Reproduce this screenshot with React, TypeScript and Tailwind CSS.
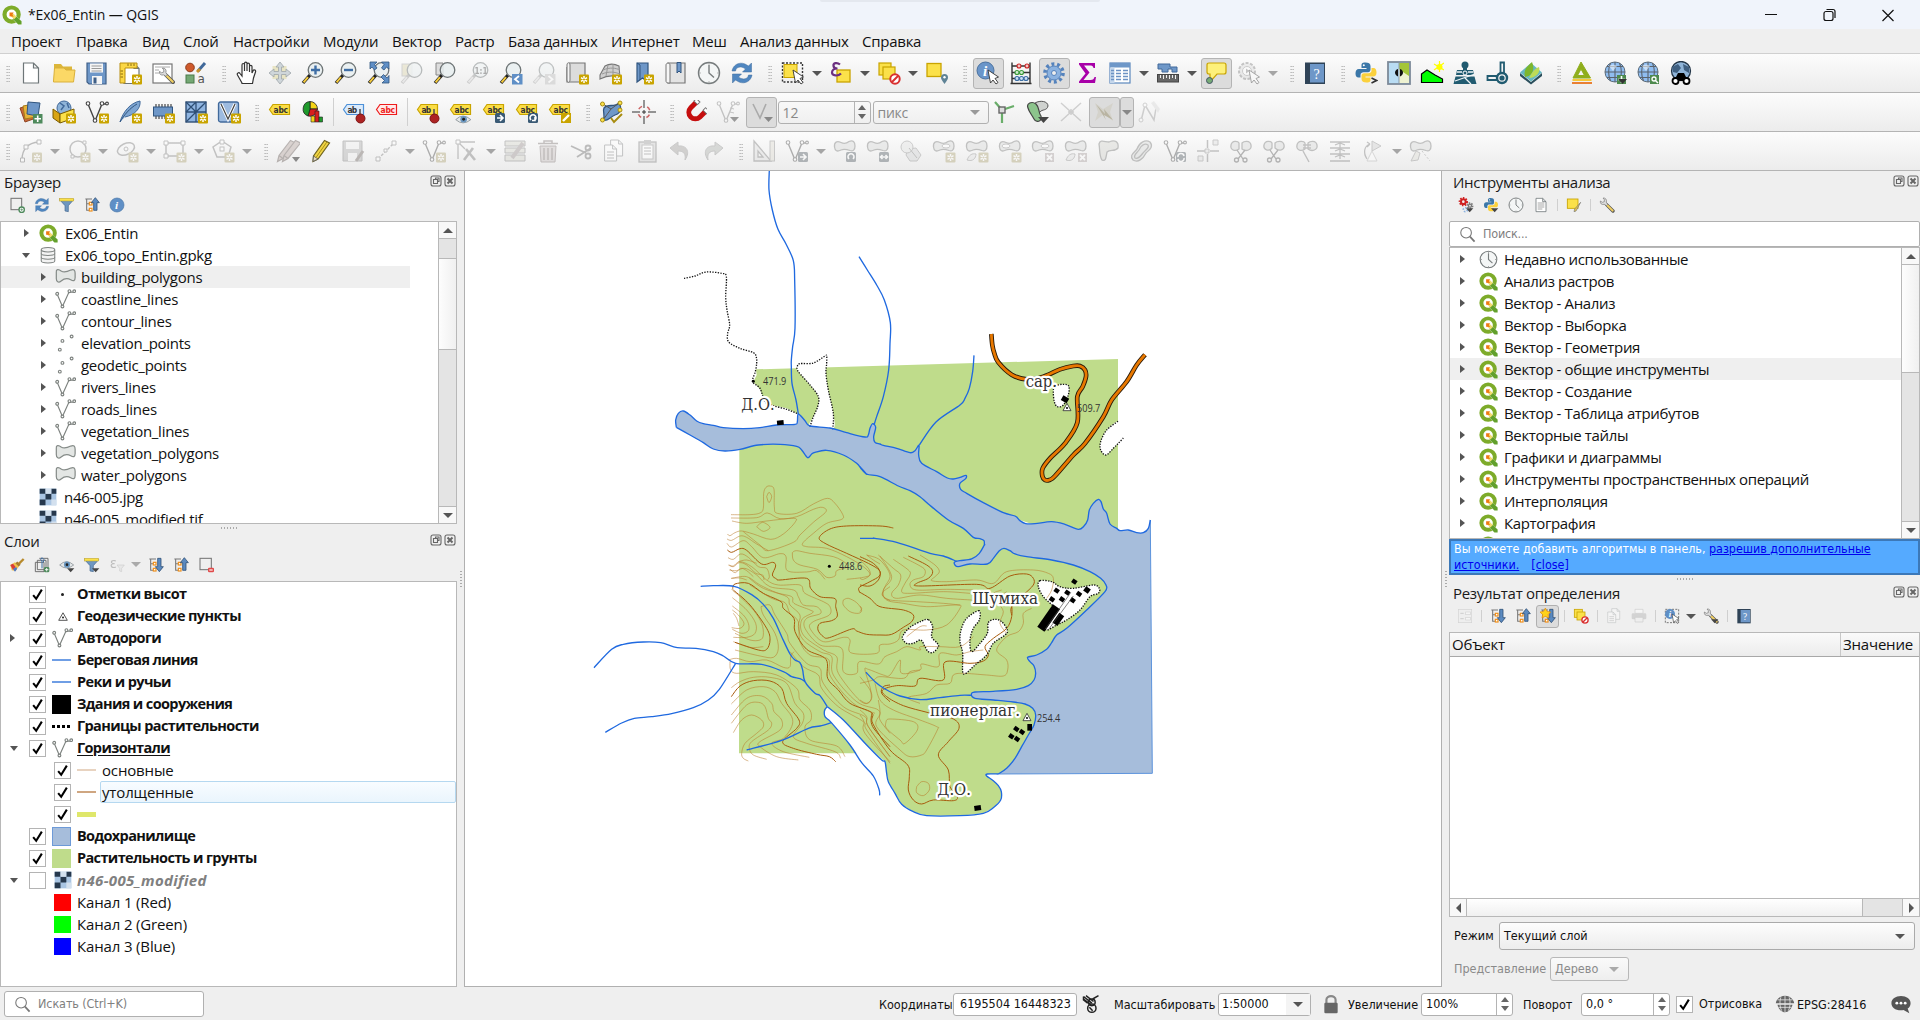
import React, { ReactNode } from "react";

/* ------------------------------------------------------------------ */
/* Icon parts, all drawn in a 24 x 24 box                               */
/* ------------------------------------------------------------------ */

const Star = ({ x = 13, y = 13 }: { x?: number; y?: number }) => (
  <g transform={`translate(${x} ${y})`}>
    <rect width="10" height="10" rx="1" fill="#c9a400" />
    <path d="M5 1.5V8.5M2 3.2L8 6.8M8 3.2L2 6.8" stroke="#fff" strokeWidth="1.5" />
    <circle cx="5" cy="5" r="1" fill="#c9a400" />
  </g>
);
const Dark = ({ d }: { d: string }) => (
  <g transform="translate(13 13)">
    <rect width="10" height="10" rx="1.5" fill="#3a5a75" />
    <path d={d} stroke="#fff" strokeWidth="1.6" fill="none" />
  </g>
);
const Lens = ({ dull }: { dull?: boolean }) => (
  <>
    <path d="M2 22L9 14" stroke={dull ? "#999" : "#222"} strokeWidth="3.4" />
    <path d="M2.6 21.3L7 16.2" stroke={dull ? "#ddd" : "#f5cb3c"} strokeWidth="2" />
    <circle cx="14.5" cy="9" r="7.3" fill="#e8eef0" fillOpacity=".85" stroke="#6d7475" strokeWidth="1.3" />
  </>
);
const Tag = ({ fill = "#fbdd45", stroke = "#c9a400", color = "#333", y = 0, t = "abc" }: { fill?: string; stroke?: string; color?: string; y?: number; t?: string }) => (
  <g transform={`translate(0 ${y})`}>
    <path d="M1.5 9.5L5 4.5H21.5V14.5H5Z" fill={fill} stroke={stroke} strokeWidth="1.2" />
    <text x="5.6" y="12.6" fontSize="8.4" fontWeight="700" fill={color} fontFamily="DejaVu Sans Condensed, DejaVu Sans, sans-serif" textLength={t.length * 4.8}>{t}</text>
  </g>
);
const Sheet = ({ x = 2, y = 2, s = 1 }: { x?: number; y?: number; s?: number }) => (
  <path transform={`translate(${x} ${y}) scale(${s})`} d="M2 0H12L17 5V20H2Z M12 0V5H17" fill="#fff" stroke="#6e7678" strokeWidth="1.2" />
);
const Pointer = () => <path d="M12 9L14.5 22L17 19L20 23L22 21.5L19 17.5L22.5 16Z" fill="#fff" stroke="#333" strokeWidth=".9" />;
const Blob = ({ fill = "#d3d9d5", d = "M1.5 8C1 3 4 1.5 8 3.5C11 5 13 5 16 2.5C20 .5 22 3 22 7C22 11 20 12.5 17 11.5C13 10 11 9.5 8 11C4 13 2 12 1.5 8Z" }: { fill?: string; d?: string }) => (
  <path d={d} fill={fill} stroke="#6e736f" strokeWidth="1.3" />
);
const Vee = () => (
  <>
    <path d="M3 4L10 21L17 4H22" fill="none" stroke="#444" strokeWidth="1.4" />
    <g fill="#fff" stroke="#444" strokeWidth="1.1"><circle cx="3" cy="3.5" r="1.8" /><circle cx="10" cy="20.5" r="1.8" /><circle cx="17" cy="3.5" r="1.8" /><circle cx="22" cy="3.5" r="1.4" /></g>
  </>
);
const Globe = () => (
  <>
    <circle cx="12" cy="11" r="10" fill="#8fbdf0" stroke="#5b6b7a" />
    <path d="M2 11H22M4 5.5H20M4 16.5H20M12 1V21M7.5 2C5 8 5 14 7.5 20M16.5 2C19 8 19 14 16.5 20" fill="none" stroke="#5a636d" strokeWidth="1.1" />
    <path d="M6 5Q10 2 14 5L10 10Z" fill="#eef5fc" fillOpacity=".6" />
  </>
);
const Scissors = () => (
  <g fill="none" stroke="#555" strokeWidth="1.3"><path d="M8 11L14 20M16 11L9 20" /><circle cx="7.5" cy="21" r="2" /><circle cx="16" cy="21" r="2" /></g>
);
const Python = () => (
  <>
    <path d="M11.5 1.5C7.5 1.5 7.5 3 7.5 5V7H12.5V8H5C2.5 8 1.5 10 1.5 12.5S2.5 16.5 4.5 16.5H6.5V14C6.5 12 8 11.2 9.5 11.2H14C15.5 11.2 16.5 10 16.5 8.5V5C16.5 2.5 14.5 1.5 11.5 1.5Z" fill="#3b77a8" />
    <path d="M12.5 21.5C16.5 21.5 16.5 20 16.5 18V16.5H11.5V15.5H19C21.5 15.5 22.5 14 22.5 11.5S21.5 7 19.5 7H17.5V9.5C17.5 11.5 16 12.2 14.5 12.2H10C8.5 12.2 7.5 13.2 7.5 14.7V18C7.5 20.5 9.5 21.5 12.5 21.5Z" fill="#fbd13d" />
    <circle cx="9.8" cy="4.2" r="1" fill="#fff" />
  </>
);
const QLogo = () => (
  <>
    <circle cx="11.5" cy="11.5" r="8.5" fill="#fff" stroke="#7dab2a" strokeWidth="5" />
    <path d="M12.5 16.5L16.5 13L24 20.5V24H19.5Z" fill="#fff" />
    <path d="M13.5 14H17.5L23.5 19.5V23.5H19.5L13.5 17.5Z" fill="#62a02c" />
    <path d="M10.5 10.5H14L17.5 14L14.5 17L10.5 13.5Z" fill="#f4dc6e" />
    <path d="M9 9H14L12.500 11.500L14 14L9 13.500Z" fill="#ee7913" />
  </>
);
const Tree = ({ up }: { up?: boolean }) => (
  <>
    <path d="M2 3H12M4 3V20H8M4 10H8" fill="none" stroke="#777" strokeWidth="1.6" />
    <g fill="#fff" stroke="#ef8f1c" strokeWidth="1.8"><rect x="8" y="8" width="4" height="4" /><rect x="8" y="17" width="4" height="4" /></g>
    <path d={up ? "M17 1L23 8.5H19.5V20H14.5V8.5H11Z" : "M17 22L23 14.5H19.5V2H14.5V14.5H11Z"} fill="#5b8ac0" stroke="#2f4f75" strokeWidth="1.2" />
  </>
);
const Funnel = () => (
  <>
    <path d="M1 4H22L14 13V22L9 21V13Z" fill="#6f97c0" stroke="#456a92" />
    <rect x="1" y="2" width="21" height="4" fill="#fbe14a" stroke="#b9a02c" strokeWidth=".8" />
  </>
);
const Wrench = () => (
  <>
    <path d="M11 11L21 21" stroke="#555" strokeWidth="5" strokeLinecap="round" />
    <path d="M12 12L20.5 20.5" stroke="#f0cf62" strokeWidth="3" strokeLinecap="round" />
    <path d="M2 6L5 8L8 7L8 4L6 1.5C10 1 12 4 11 8L13 11L11 13L8 11C4 12 1.5 10 2 6Z" fill="#ddd" stroke="#777" />
  </>
);
const Eye = () => (
  <>
    <path d="M1 12Q11 2 22 12Q11 21 1 12Z" fill="#e4e8ea" stroke="#8a9296" strokeWidth="1.2" />
    <circle cx="12" cy="11.5" r="4.6" fill="#6895bf" /><circle cx="12" cy="11.5" r="2" fill="#222" />
  </>
);
const Caret = () => <path d="M12 17H23L17.5 23Z" fill="#444" />;
const Clock = () => (
  <>
    <circle cx="12" cy="12" r="10.5" fill="#f4f6f6" stroke="#777c7d" strokeWidth="1.4" />
    <path d="M12 4V12L17 16.5" fill="none" stroke="#777c7d" strokeWidth="1.4" />
    <path d="M12 2.5V3.5M12 20.5V21.5M2.5 12H3.5M20.5 12H21.5" stroke="#777" />
  </>
);
const Refresh = () => (
  <g fill="#4f86c0" stroke="#3d6b9c" strokeWidth=".5">
    <path d="M2 10C3 4 9 .5 15 3L18.5 5L21.5 2V11H12.5L15.5 8C11 4.5 6 6 5.5 10Z" />
    <path d="M22 14C21 20 15 23.5 9 21L5.5 19L2.5 22V13H11.5L8.5 16C13 19.5 18 18 18.5 14Z" />
  </g>
);
const Book = () => (
  <>
    <rect x="2" y="1.5" width="20" height="21.5" fill="#2f4357" /><rect x="7" y="3" width="14" height="18.5" fill="#6e97c8" />
    <text x="10.5" y="17.5" fontSize="14" fill="#fff" fontFamily="Liberation Serif, serif">?</text>
  </>
);
const Pencil = ({ fill = "#f2d544" }: { fill?: string }) => (
  <path d="M16.5 1.5L21.5 4L9 19.5L3.5 22.5L5 16.5ZM5 16.5L9 19.5" fill={fill} stroke="#6f6460" strokeWidth="1.2" />
);
const Raster = () => (
  <>
    <rect x="2" y="2" width="20" height="20" fill="#a9c5e3" />
    <path d="M2 2h7v6h-7zM16 2h6v6h-6zM9 8h7v7h-7zM2 15h7v7h-7z" fill="#26384d" />
    <path d="M9 2h7v6h-7zM16 15h6v7h-6z" fill="#d3e0ee" />
  </>
);
const Squares = () => (
  <g fill="#fbe14a" stroke="#c9a400" strokeWidth="1.2"><rect x="2" y="2" width="12" height="12" /><rect x="6" y="6" width="12" height="12" /></g>
);
const Forbid = () => (
  <><circle cx="18" cy="18" r="4.7" fill="#fff" stroke="#d93030" strokeWidth="2" /><path d="M15 21L21 15" stroke="#d93030" strokeWidth="2" /></>
);
const Pin = () => (
  <><path d="M18 9V15" stroke="#555" strokeWidth="1.6" /><circle cx="18.5" cy="18.5" r="4.5" fill="#ad2323" stroke="#7c1414" /></>
);

const icons: Record<string, ReactNode> = {
  blank: <Sheet x={2.5} />,
  folder: <><path d="M2 3H9L11 5.5H20V9H2Z" fill="#dcb63a" /><path d="M1.5 20L2.5 7H12L14 9H23L21.5 21H1.5Z" fill="#fbd866" stroke="#d9b03a" /></>,
  save: <><path d="M2 2H21V23H4L2 21Z" fill="#6e97c8" stroke="#3f5f87" strokeWidth="1.2" /><rect x="5" y="2.5" width="13" height="9" fill="#f5f5f5" /><path d="M6.5 5H16.5M6.5 7.5H16.5M6.5 10H16.5" stroke="#999" /><rect x="7" y="15" width="10" height="8" fill="#f5f5f5" /><rect x="8.5" y="16.5" width="3" height="6" fill="#3f5f87" /></>,
  layoutNew: <><Sheet x={4} y={2.5} /><path d="M2 2H19V7H7V22H2Z" fill="#fbd745" stroke="#b98f10" /><path d="M10 2.5V5M13 2.5V5M16 2.5V5M2.5 10H5M2.5 13H5M2.5 16H5" stroke="#8a6d10" /><Star x={14} y={13.5} /></>,
  layouts: <><rect x="2" y="3" width="19" height="19" fill="#fff" stroke="#777" strokeWidth="1.2" /><path d="M4 6H19M4 9H8M4 12H8" stroke="#aaa" /><g transform="translate(7 6) scale(.72)"><Wrench /></g></>,
  style: <><circle cx="6" cy="6.5" r="4.3" fill="#cf5a2c" stroke="#8e3c1c" /><rect x="2" y="14" width="8" height="8" fill="#74a874" stroke="#4b7a4b" /><path d="M14 10L21 2" stroke="#41699a" strokeWidth="3" /><path d="M13 11L16 8" stroke="#c8912c" strokeWidth="3" /><text x="13.5" y="22" fontSize="12" fill="#555" fontFamily="DejaVu Sans">a</text></>,
  hand: <path d="M7 22L2.5 14C1.5 12 4 11 5 12.5L7 15V4C7 2 9.5 2 9.5 4V10V2.5C9.5 .7 12 .7 12 2.5V10V3.5C12 1.7 14.5 1.7 14.5 3.5V11V5.5C14.5 4 17 4 17 5.5V12L18.5 9C20 8.5 21 9.5 20.5 11L18.5 17L17.5 22.5H7Z" fill="#fff" stroke="#333" strokeWidth="1.2" />,
  panSel: <><rect x="4.5" y="5" width="14" height="13" fill="#e8e4c4" /><path d="M12 1L16 6H13.5V10.5H18V8L23 12L18 16V13.5H13.5V18H16L12 23L8 18H10.5V13.5H6V16L1 12L6 8V10.5H10.5V6H8Z" fill="#cfd6da" stroke="#9ea6aa" strokeWidth=".8" /></>,
  zoomIn: <><Lens /><path d="M14.5 4.5V13.5M10 9H19" stroke="#3f6ea5" strokeWidth="2.4" /></>,
  zoomOut: <><Lens /><path d="M10 9H19" stroke="#3f6ea5" strokeWidth="2.4" /></>,
  zoomFull: <><Lens /><path d="M3 1H10L7.5 3.5L10 7L7.5 9L5 6L3 8ZM22 1V8L19.5 6L17 9L14.5 7L17 3.5L14.5 1ZM22 22H15L17.5 19.5L14 16L16.5 13.5L20 17L22 14.5Z" fill="#5f8fc6" stroke="#30557f" strokeWidth=".8" /></>,
  zoomSel: <g opacity=".45"><rect x="2" y="3" width="10" height="12" fill="#ddd7b0" stroke="#aaa" /><Lens dull /></g>,
  zoomLayer: <><path d="M3 2H10V14H3Z" fill="#ddd" stroke="#888" /><Lens /></>,
  zoomNative: <g opacity=".45"><Lens dull /><text x="8.5" y="13" fontSize="9" fontWeight="700" fill="#555" fontFamily="DejaVu Sans" textLength="13" lengthAdjust="spacingAndGlyphs">1:1</text></g>,
  zoomLast: <><Lens /><rect x="13" y="13" width="10.5" height="10.5" fill="#5f8fc6" /><path d="M20 15L16 18.2L20 21.5" stroke="#fff" strokeWidth="1.8" fill="none" /></>,
  zoomNext: <g opacity=".4"><Lens dull /><rect x="13" y="13" width="10.5" height="10.5" fill="#bbb" /><path d="M16.5 15L20.5 18.2L16.5 21.5" stroke="#fff" strokeWidth="1.8" fill="none" /></g>,
  mapNew: <><path d="M4 2H20V21H2V6" fill="#dcdcdc" stroke="#777" strokeWidth="1.2" /><path d="M2 19C2 22 5 22 5 19V4C5 1 2 1 2 4Z" fill="#f5f5f5" stroke="#777" /><Star x={14} y={13.5} /></>,
  map3d: <><path d="M2 14L7 5C12 2 17 3 21 5L22 17C15 13 8 15 2 18Z" fill="#cfcfcf" stroke="#777" strokeWidth="1.1" /><path d="M10 4L8 15M15 3V14M5 9C12 6 18 7 22 9M4 13C11 10 17 11 22 13" stroke="#999" fill="none" /><Star x={14} y={13.5} /></>,
  bookmarkNew: <><path d="M6 2H17V21L11.5 17L6 21Z" fill="#6e97c8" stroke="#30557f" strokeWidth="1.2" /><path d="M6 2L9 4V19" fill="none" stroke="#30557f" /><Star x={13} y={13.5} /></>,
  bookmarks: <><path d="M4 2H21V22H4Z" fill="#e3e3e3" stroke="#777" strokeWidth="1.2" /><path d="M2 4C2 1.5 6 1.5 6 4V22H4C2 22 2 20 2 20Z" fill="#f6f6f6" stroke="#777" /><path d="M13 1.5H17V12L15 10L13 12Z" fill="#6e97c8" stroke="#30557f" /></>,
  clock: <Clock />,
  refresh: <Refresh />,
  select: <><rect x="1.5" y="2" width="20" height="19" fill="none" stroke="#333" strokeWidth="1.4" strokeDasharray="2 1.5" /><rect x="3" y="3.5" width="13" height="13" fill="#fbe14a" stroke="#c9a400" /><Pointer /></>,
  selectExp: <><rect x="8" y="9" width="13" height="12" fill="#fbe14a" stroke="#c9a400" strokeWidth="1.3" /><path d="M11 3.5C8 1 4 2 4.5 5C4.8 7 7 7.5 8.5 7.5C5 7.5 3 9 3 11.5C3 15 9 15.5 12 12.5" fill="none" stroke="#6b2f80" strokeWidth="2.2" /></>,
  deselect: <><Squares /><Forbid /></>,
  selectLoc: <><rect x="2" y="2.5" width="14" height="13" fill="#fbe14a" stroke="#c9a400" strokeWidth="1.3" /><path d="M19.5 23C17 19.5 16 18 16 16.5A3.5 3.5 0 0 1 23 16.5C23 18 22 19.5 19.5 23Z" fill="#5f8396" /><circle cx="19.5" cy="16.3" r="1.2" fill="#fff" /></>,
  identify: <><circle cx="9.5" cy="9.5" r="8.5" fill="#6a95c9" stroke="#4a719f" /><text x="7" y="15" fontSize="15" fontStyle="italic" fontWeight="700" fill="#fff" fontFamily="Liberation Serif">i</text><Pointer /></>,
  abacus: <><path d="M3 1.5V22M21 1.5V22M1.5 22.5H22.5M3 5H21M3 11.5H21M3 17.5H21" stroke="#333" strokeWidth="1.4" /><g fill="#f4c8c8" stroke="#c22" strokeWidth="1.1"><circle cx="10" cy="5" r="2" /><circle cx="18" cy="5" r="2" /></g><g fill="#cfeccf" stroke="#3a9a3a" strokeWidth="1.1"><circle cx="8" cy="11.5" r="2" /><circle cx="12.5" cy="11.5" r="2" /></g><g fill="#cfe0f4" stroke="#3a6ea5" strokeWidth="1.1"><circle cx="8" cy="17.5" r="2" /><circle cx="12.5" cy="17.5" r="2" /><circle cx="17" cy="17.5" r="2" /></g></>,
  gear: <><circle cx="12" cy="12" r="9" fill="none" stroke="#5583bd" strokeWidth="3.6" strokeDasharray="2.9 2.755" /><circle cx="12" cy="12" r="7" fill="#8bb2e0" stroke="#5583bd" /><circle cx="12" cy="12" r="2.5" fill="#eee" stroke="#5583bd" /></>,
  sigma: <path d="M4 2H20V7H18.5C18 5 17 4.5 14.5 4.5H9L14.5 11.5L8.5 19H15.5C18 19 19 18 19.5 16H21L20 22H4V20.5L10.5 12.5L4 3.5Z" fill="#a800a8" />,
  table: <><rect x="2" y="2" width="20" height="20" fill="#fff" stroke="#5b87bd" strokeWidth="1.2" /><rect x="2" y="2" width="20" height="4.5" fill="#6e97c8" /><rect x="2" y="6.5" width="4.5" height="15.5" fill="#c5d7ec" /><path d="M8 9.5H13M15 9.5H20M8 12.5H13M15 12.5H20M8 15.5H13M15 15.5H20M8 18.5H13M15 18.5H20M3 9.5H6M3 12.5H6M3 15.5H6M3 18.5H6" stroke="#6d93c4" strokeWidth="1.3" /></>,
  measure: <><path d="M2 3H14V6H21V11H16V8H12V11H6V8H2Z" fill="#6e97c8" stroke="#41699a" /><rect x="1.5" y="13.5" width="21" height="7.5" fill="#666" stroke="#444" /><path d="M4.5 14V17M7.5 14V18M10.5 14V17M13.5 14V18M16.5 14V17M19.5 14V18" stroke="#eee" /></>,
  tip: <><path d="M5 2H20Q22 2 22 4V11Q22 13 20 13H13L6 21V13H5Q3 13 3 11V4Q3 2 5 2Z" fill="#fdf07a" stroke="#c9a400" strokeWidth="1.2" /><circle cx="5.5" cy="19.5" r="3" fill="#76ab76" stroke="#456" /></>,
  action: <g opacity=".45"><circle cx="10" cy="10" r="8" fill="#ddd" stroke="#888" strokeWidth="2" strokeDasharray="3 1.5" /><circle cx="10" cy="10" r="4.5" fill="#fff" stroke="#999" /><path d="M9 7.5L12.5 10L9 12.5Z" fill="#888" /><Pointer /></g>,
  book: <Book />,
  python: <><Python /><path d="M17.5 17L22.5 19.5L17.5 22" fill="none" stroke="#333" strokeWidth="1.6" /></>,
  image: <><rect x="1" y="1" width="22" height="22" fill="#b9dcf3" stroke="#7d8a99" strokeWidth="1.8" /><path d="M12 2H22V22H12Z" fill="#a4c639" /><path d="M13 9L22 15V22H12V8Z" fill="#eef2d2" /><path d="M12 2V22" stroke="#8b9bab" /><path d="M11 8C7 9 7 14 11 15.5ZM13 8C17 9 17 14 13 15.5Z" fill="#111" /></>,
  terrain: <><path d="M1.5 13L7 9L15 14L22.5 18V21.5H1.5Z" fill="#0f0" stroke="#000" strokeWidth="1.2" /><circle cx="19.5" cy="6" r="3" fill="#ff0" /><path d="M19.5 0V11M14 3L24 9M14 9L24 2" stroke="#ff0" strokeWidth="1.2" /></>,
  saga: <g fill="#215b70"><path d="M4 9H20L21 14H3ZM2.500 15.500H21.500L23.500 23H.500Z" /><circle cx="12" cy="4" r="3.500" /><path d="M10 5H14V14H10Z" /><path d="M2 20L22 13M12 17L18 23M4 11H9M15 11H20" stroke="#eef4f6" strokeWidth="1.300" /><circle cx="12" cy="12" r="2" fill="#215b70" stroke="#fff" /></g>,
  node: <g fill="none" stroke="#215b70" strokeWidth="2.4"><circle cx="16" cy="17" r="5" /><circle cx="16" cy="17" r="1.4" fill="#215b70" /><path d="M14.5 12V1.5H18V12M11 15H1.5V19H11" strokeWidth="1.8" /></g>,
  qfield: <><path d="M1 12L12 21L23 12V15L12 23.5L1 15Z" fill="#2b4f5c" /><path d="M12 2L23 11.5L12 20.5L1 11.5Z" fill="#67b8c3" /><path d="M6 16C4 8 9 5 13 1C16 8 14 15 6 16Z" fill="#7db62c" /><path d="M10 17C12 14 14 8 20 6C22 11 17 17 10 17Z" fill="#bddb57" /></>,
  delta: <><path d="M11 1L20.5 17H3Z M11 8L7.5 14.5H14.5Z" fill="#8fae1c" fillRule="evenodd" stroke="#8fae1c" /><path d="M2.5 19H21.5" stroke="#f5c83a" strokeWidth="2" /><path d="M2 22H22" stroke="#e8731d" strokeWidth="1.8" /></>,
  globeAdd: <><Globe /><rect x="14" y="14" width="9" height="9" fill="#4e8a4e" /><path d="M18.5 15V22M15 18.5H22" stroke="#fff" strokeWidth="1.6" /><path d="M15 18H24L19.5 23Z" fill="#333" /></>,
  globeFind: <><Globe /><rect x="14" y="14" width="9" height="9" fill="#4e8a4e" /><circle cx="18" cy="18" r="2" fill="none" stroke="#fff" strokeWidth="1.3" /><path d="M19.5 19.5L22 22" stroke="#fff" strokeWidth="1.5" /></>,
  globeBin: <><circle cx="12" cy="10" r="9.5" fill="#8fb4d8" stroke="#243648" strokeWidth="1.3" /><path d="M3 6L9 3L12 7L8 12L4 11ZM14 3L20 6V12L15 9Z" fill="#3f5f80" /><path d="M5 20L9 12H15L19 20Z" fill="#000" /><circle cx="6.5" cy="20" r="3" fill="#fff" stroke="#000" strokeWidth="1.8" /><circle cx="17.5" cy="20" r="3" fill="#fff" stroke="#000" strokeWidth="1.8" /></>,

  dsm: <><path d="M1 8L12 5L17 18L6 22Z" fill="#c9683a" stroke="#8e4420" /><path d="M4 6L15 4L17 17L6 19Z" fill="#e6b33a" stroke="#a87c18" /><path d="M9 2L21 3L19 16L8 14Z" fill="#6e97c8" stroke="#30557f" /><rect x="14" y="14" width="9.5" height="9.5" fill="#4e8a5c" /><path d="M18.7 15.5V22M15.5 18.7H22" stroke="#fff" strokeWidth="1.6" /></>,
  gpkg: <><circle cx="12" cy="8" r="7" fill="#8fb4d8" stroke="#41699a" /><path d="M8 3L12 6L9 10M15 3L17 8" stroke="#41699a" strokeWidth="1.5" fill="none" /><path d="M1 9L8 14V23L1 18Z" fill="#d9a514" stroke="#7b5c00" /><path d="M8 14L22 9V18L8 23Z" fill="#fbe14a" stroke="#7b5c00" /><Star x={14} y={13.5} /></>,
  shp: <><Vee /><Star x={14} y={13.5} /></>,
  feather: <><path d="M2 22C5 12 12 3 22 1C23 8 17 15 7 17" fill="#7fa6d2" stroke="#41699a" /><path d="M2 22C6 15 12 8 19 4" stroke="#30557f" fill="none" /><Star x={14} y={13.5} /></>,
  chip: <><path d="M5 4V19M8 4V19M11 4V19M14 4V19M17 4V19M20 4V19" stroke="#555" strokeWidth="1.3" /><rect x="2.5" y="7" width="19" height="9" fill="#6e97c8" stroke="#30557f" /><Star x={14} y={13.5} /></>,
  mesh: <><rect x="2" y="2" width="20" height="20" fill="#8fb4e0" stroke="#2f4f75" strokeWidth="1.4" /><path d="M2 12H22M12 2V22M2 2L12 12M12 2L2 12M12 12L22 2M12 12L2 22" stroke="#2f4f75" strokeWidth="1.3" /><Star x={14} y={13.5} /></>,
  virtual: <><rect x="1.5" y="2" width="20" height="20" rx="2" fill="#9dbbe0" stroke="#41699a" strokeWidth="1.3" /><path d="M4 4L11 19L18 4" stroke="#fff" strokeWidth="3" fill="none" /><path d="M4 4L11 19L18 4" stroke="#444" strokeWidth="1.2" fill="none" /><Star x={14} y={13.5} /></>,
  label: <Tag />,
  diagram: <><path d="M9 9V1.5A7.5 7.5 0 0 1 16.5 9Z" fill="#f5d416" stroke="#222" strokeWidth=".8" /><path d="M9 9H16.5A7.5 7.5 0 0 1 7 16Z" fill="#d81e1e" stroke="#222" strokeWidth=".8" /><path d="M9 9V1.5A7.5 7.5 0 0 0 7 16Z" fill="#1f9a2c" stroke="#222" strokeWidth=".8" /><path d="M10 22V16H14V22Z" fill="#f5d416" stroke="#222" strokeWidth=".6" /><path d="M14 22V11H18V22Z" fill="#d81e1e" stroke="#222" strokeWidth=".6" /><path d="M18 22V17H21.5V22Z" fill="#1f9a2c" stroke="#222" strokeWidth=".6" /></>,
  labPinBlue: <><Tag fill="#dcebfb" stroke="#4c90d8" t="ab" /><Pin /></>,
  labRed: <Tag fill="#ffe9e9" stroke="#ee1c1c" color="#ee1c1c" />,
  labPin: <><Tag t="ab" /><Pin /></>,
  labEye: <><Tag /><g transform="translate(6 11) scale(.72)"><Eye /></g></>,
  labMove: <><Tag /><Dark d="M2 5H8M5 2L8 5L5 8" /></>,
  labRot: <><Tag /><Dark d="M3 7A3 3 0 1 1 7 7M7 4V7.5H4" /></>,
  labEdit: <><Tag /><rect x="13" y="13" width="10" height="10" fill="#c9a400" /><path d="M15 21L21 15" stroke="#fff" strokeWidth="2.4" /></>,
  topo: <><path d="M5 8C9 3 15 8 20 3C23 8 22 13 16 15C11 17 8 22 4 20C7 15 3 12 5 8Z" fill="#6e97c8" stroke="#30557f" strokeWidth="1.3" /><path d="M4 4L12 9L20 3M12 9L4 20" stroke="#555" fill="none" /><g fill="#fbe14a" stroke="#a88c10"><circle cx="3.5" cy="4" r="2" /><circle cx="21" cy="3" r="2" /><circle cx="3.5" cy="20" r="2" /><circle cx="21" cy="10" r="2" /></g><path d="M12 18L15 22L23 14" fill="none" stroke="#a88c10" strokeWidth="2" /></>,
  cross: <><path d="M12 0V24M0 12H24" stroke="#333" strokeWidth="1" strokeDasharray="8 2 4 2 8" /><circle cx="12" cy="12" r="6" fill="none" stroke="#c66" strokeWidth="1.5" strokeDasharray="4 5.4" strokeDashoffset="-2.7" /></>,
  magnet: <g transform="rotate(45 12 12)"><path d="M6 3V12A6.5 6.5 0 0 0 19 12V3" fill="none" stroke="#c50e0e" strokeWidth="5" /><path d="M3.5 1.5H8.5V5H3.5ZM16.5 1.5H21.5V5H16.5Z" fill="#fff" stroke="#777" /></g>,
  veeSnap: <><g opacity=".28"><Vee /><path d="M14 8L18 9M14 12L18 13" stroke="#444" /></g><path d="M14 17H23L18.5 22Z" fill="#999" /></>,
  veeOn: <><path d="M4 4L11 18L17 4" fill="none" stroke="#aaa" strokeWidth="1.6" /><path d="M15 17H24L19.5 22Z" fill="#888" /></>,
  topoGreen: <><path d="M9 10L2 2M9 10L21 6M9 10V23" stroke="#6aae6a" strokeWidth="2.2" /><rect x="6" y="7" width="6" height="6" fill="#ddd" stroke="#666" strokeWidth="1.4" /></>,
  overlap: <><path d="M9 3C14 0 22 1 22 6C21 11 16 9 14 12" fill="#cfd2cf" stroke="#555" /><path d="M2 8C0 3 6 1 10 4C14 8 12 12 15 16C16 22 10 23 8 19C6 15 3 12 2 8Z" fill="#8cc48c" stroke="#444" strokeWidth="1.2" /><Caret /></>,
  xcross: <path opacity=".3" d="M2 3L22 21M22 3L2 21M12 9V15M9 12H15" stroke="#777" strokeWidth="1.5" />,
  trace: <g opacity=".6"><path d="M3 3L11 9L21 3L18 12L21 21L12 14L3 21L6 12Z" fill="#cfccc0" /><path d="M4 4L13 14L12 9L21 20L12 15L14 20Z" fill="#a39b7c" /></g>,
  selfSnap: <g opacity=".3"><path d="M3 21L7 5L16 20L18 8" fill="none" stroke="#777" strokeWidth="1.5" /><circle cx="7" cy="5" r="2" fill="#fff" stroke="#777" /><circle cx="3" cy="20" r="2" fill="#fff" stroke="#777" /><path d="M13 3L20 13L22 9L16 1Z" fill="#ccc" /></g>,

  arc: <><path d="M3 21C3 10 8 4 20 3" fill="none" stroke="#666" strokeWidth="1.3" /><path d="M1.5 19h4v4h-4zM5 6h4v4h-4zM18 1h4v4h-4z" fill="#fff" stroke="#666" /><Star x={13} y={13.5} /></>,
  circle: <><circle cx="11" cy="10" r="8" fill="none" stroke="#777" strokeWidth="1.5" /><path d="M16 2h3v3h-3zM4 16h3v3h-3z" fill="#fff" stroke="#777" /><Star x={13.5} y={13.5} /></>,
  ellipse: <><ellipse cx="11" cy="10" rx="9" ry="5.5" transform="rotate(-25 11 10)" fill="none" stroke="#777" strokeWidth="1.5" /><circle cx="11" cy="10" r="2" fill="none" stroke="#777" /><Star x={13.5} y={13.5} /></>,
  rect: <><rect x="3" y="4" width="17" height="13" fill="none" stroke="#777" strokeWidth="1.5" /><path d="M1 2h4v4h-4zM18 2h4v4h-4zM1 15h4v4h-4z" fill="#fff" stroke="#777" /><Star x={13.5} y={13.5} /></>,
  polygon: <><path d="M11 2L20 8L17 18H6L2 8Z" fill="none" stroke="#777" strokeWidth="1.5" /><rect x="9" y="8" width="4" height="4" fill="#fff" stroke="#777" /><path d="M9 1h4v4h-4z" fill="#fff" stroke="#777" /><Star x={13.5} y={13.5} /></>,
  pencils: <><g opacity=".45"><g transform="translate(-2 0)"><Pencil fill="#b9a9a4" /></g><g transform="translate(3 0)"><Pencil fill="#b9a9a4" /></g></g><path d="M16 18H24L20 23Z" fill="#888" /></>,
  pencil: <><path d="M16.5 1.5L21.5 4L10 20L5 22.5L5.5 17Z" fill="#f2d544" stroke="#6f6420" strokeWidth="1.2" /><path d="M5.5 17L10 20L5 22.5Z" fill="#e9dcc2" stroke="#555" strokeWidth=".8" /><path d="M19 2.8L8 18.5" stroke="#a8901a" /></>,
  saveEdit: <><path d="M2 2H21V22H2Z" fill="#aaa" stroke="#777" /><rect x="5" y="3" width="13" height="7" fill="#eee" /><rect x="7" y="14" width="9" height="8" fill="#eee" /><path d="M22 12L15 22" stroke="#7a5a4a" strokeWidth="3" /></>,
  digLine: <><path d="M4 20L20 4" stroke="#777" strokeWidth="1.3" strokeDasharray="3 1.5" /><path d="M2 18h4v4h-4zM18 2h4v4h-4zM10 10h3v3h-3z" fill="#fff" stroke="#777" /></>,
  vertexTool: <><path d="M3 20V3H20M3 3L10 10" fill="none" stroke="#777" strokeWidth="1.3" /><path d="M1 1h4v4h-4z" fill="#fff" stroke="#777" /><path d="M9 21L18 9M11 10L20 21" stroke="#777" strokeWidth="2.6" /></>,
  multiEdit: <><path d="M2 2h20v5h-20zM2 9h20v5h-20zM2 16h20v6h-20z" fill="#d5d5b4" stroke="#777" /><path d="M20 4L9 19" stroke="#a88" strokeWidth="4" /></>,
  trash: <><path d="M4 7H20L19 23H5Z" fill="#d5b9b5" stroke="#8a6a66" /><path d="M2 4.5H22M8 4V2H16V4M8 9V21M12 9V21M16 9V21" stroke="#8a6a66" strokeWidth="1.5" fill="none" /></>,
  cut: <g fill="none" stroke="#666" strokeWidth="1.8"><path d="M2 7L17 14M8 18L22 9" /><circle cx="19" cy="17" r="2.5" /><circle cx="19" cy="9" r="2.5" /></g>,
  copy: <><Sheet x={7} y={1} s={0.8} /><Sheet x={1} y={6} s={0.8} /><path d="M5 13H12M5 16H12M5 19H12" stroke="#777" /></>,
  paste: <><rect x="4" y="3" width="17" height="20" fill="#ccc" stroke="#777" strokeWidth="1.3" /><rect x="7" y="6" width="11" height="14" fill="#fff" stroke="#888" /><path d="M9 9H16M9 12H16M9 15H16" stroke="#777" /><rect x="9" y="1" width="7" height="4" fill="#999" /></>,
  undo: <path d="M2 9L10 3V7C18 6 23 12 17 21C18 15 16 12 10 12V16Z" fill="#a59a90" stroke="#888" />,
  redo: <path d="M22 9L14 3V7C6 6 1 12 7 21C6 15 8 12 14 12V16Z" fill="#a5af9f" stroke="#888" />,
  square: <><path d="M2 2L19 22H2ZM6 12V18H11Z" fill="#ddd" fillRule="evenodd" stroke="#777" strokeWidth="1.3" /><rect x="18" y="2" width="4.5" height="20" fill="#e4dcb8" stroke="#888" /></>,
  veeMove: <><Vee /><Dark d="M2 5H8M5 2L8 5L5 8" /></>,
  fRotate: <><Blob /><Dark d="M3 7A3 3 0 1 1 7 7" /></>,
  fScale: <><Blob /><Dark d="M1.5 5H8.5M3.5 3L1.5 5L3.5 7M6.5 3L8.5 5L6.5 7" /></>,
  simplify: <><path d="M9 10L17 9L22 16L18 22H11L7 16Z" fill="#ccd2d6" stroke="#888" /><circle cx="8" cy="8" r="6" fill="#dfe3e0" stroke="#888" /><path d="M10 9L18 19" stroke="#777" /></>,
  ringAdd: <><Blob /><ellipse cx="14" cy="7" rx="4" ry="2" fill="#fff" stroke="#888" /><Star x={13.5} y={13.5} /></>,
  partAdd: <><Blob /><path d="M2 21C4 16 7 14 11 15C11 19 8 23 2 21Z" fill="#dfe3e0" stroke="#888" /><Star x={13.5} y={13.5} /></>,
  ringFill: <><Blob /><ellipse cx="8" cy="7" rx="4" ry="2" fill="#fff" stroke="#888" /><Star x={13.5} y={13.5} /></>,
  ringDel: <><Blob /><ellipse cx="14" cy="7" rx="4" ry="2" fill="#fff" stroke="#888" /><rect x="14" y="14" width="9" height="9" fill="#b99" /><path d="M16 16L21 21M21 16L16 21" stroke="#fff" strokeWidth="1.8" /></>,
  partDel: <><Blob /><path d="M2 21C4 16 7 14 11 15C11 19 8 23 2 21Z" fill="#dfe3e0" stroke="#888" /><rect x="14" y="14" width="9" height="9" fill="#b99" /><path d="M16 16L21 21M21 16L16 21" stroke="#fff" strokeWidth="1.8" /></>,
  reshape: <Blob d="M2 5C3 0 8 3 12 3C18 0 22 3 21 9C18 13 13 10 10 13C9 18 9 23 5 21C2 17 3 10 2 5Z" fill="#d3d3c0" />,
  offset: <><Blob d="M3 21C-1 16 4 14 7 10C9 4 15 0 20 3C24 8 19 11 16 14C13 20 8 24 3 21Z" /><Blob d="M5 19C3 16 7 14 9 11C11 6 15 4 18 6C20 9 15 11 13 14C10 18 7 20 5 19Z" /></>,
  reverse: <><Vee /><Dark d="M2 5A3 3 0 0 1 8 4M8 6A3 3 0 0 1 2 7" /></>,
  trim: <><path d="M1 12H9M14 12H23M11.5 1V9M11.5 15V23" stroke="#777" strokeWidth="1.5" /><path d="M9 10h4v4h-4zM2 17h5v5h-5zM17 1h5v5h-5z" fill="#ddd" stroke="#888" /></>,
  split: <><Blob d="M10 10C6 13 1 11 2 6C3 1 9 2 10 4ZM13 10C17 13 23 11 22 6C21 1 15 2 13 4Z" /><Scissors /></>,
  splitParts: <><Blob d="M10 9C7 13 1 11 2 6C3 1 9 2 10 4ZM13 9C17 13 23 11 22 6C21 1 15 2 13 4Z" /><Scissors /></>,
  merge: <><Blob d="M10 10C6 13 1 11 2 6C3 1 9 2 10 4ZM13 10C17 13 23 11 22 6C21 1 15 2 13 4Z" /><path d="M8 12L14 23M8 6H16M8 9H16" stroke="#777" strokeWidth="1.4" /></>,
  mergeAttr: <path d="M2 3H22M2 9H22M2 15H22M2 22H22M7 6L12 4L17 6M7 12L12 10L17 12M7 18L12 16L17 18M12 4V20" stroke="#777" strokeWidth="1.3" fill="none" />,
  rotSym: <><path d="M6 20C2 14 3 7 9 5M9 5L6 3M9 5L6 8" stroke="#777" fill="none" strokeWidth="1.3" /><path d="M11 2L20 7L11 12Z" fill="#ccc" stroke="#888" /><path d="M11 12L16 22H6Z" fill="#fff" stroke="#aaa" /></>,
  offSym: <><Blob /><path d="M2 22L7 12L11 14L9 21Z" fill="#e2dcc4" stroke="#888" /><path d="M13 12L21 22" stroke="#888" strokeDasharray="2 2" /></>,

  addLayer: <><rect x="3" y="2" width="16" height="17" fill="none" stroke="#777" strokeWidth="1.6" /><circle cx="19" cy="19" r="4" fill="#fff" stroke="#4e8a5c" strokeWidth="2" /><path d="M17 19H21M19 17V21" stroke="#4e8a5c" /></>,
  funnel: <Funnel />,
  treeUp: <Tree up />,
  treeDown: <Tree />,
  info: <><circle cx="12" cy="12" r="10.5" fill="#5f8fc6" stroke="#4a77a8" /><text x="9" y="18" fontSize="17" fontStyle="italic" fontWeight="700" fill="#fff" fontFamily="Liberation Serif">i</text></>,
  brush: <><path d="M12 13L22 3" stroke="#b78a2c" strokeWidth="3.5" /><path d="M2 12L9 8L15 14L10 21L4 20Z" fill="#f0c04a" /><path d="M2 12L6 10L10 15L6 19Z" fill="#d83a3a" /><path d="M6 18L11 15L12 18L9 22Z" fill="#4a77c8" /><path d="M11 8L16 13" stroke="#a87a2c" strokeWidth="4" /></>,
  group: <><path d="M2 8H15V22H2ZM5 5H18V19H5ZM8 2H21V16" fill="none" stroke="#666" strokeWidth="1.4" /><path d="M12 17V6L10 4L12 1L15 4L14 8" fill="none" stroke="#3f6ea5" strokeWidth="1.5" /><rect x="15" y="15" width="8" height="8" rx="2" fill="#4e8a5c" /><path d="M19 16.5V21.5M16.5 19H21.5" stroke="#fff" strokeWidth="1.3" /></>,
  eyeDd: <><Eye /><Caret /></>,
  funnelDd: <><Funnel /><Caret /></>,
  epsFilter: <g opacity=".4"><text x="1" y="16" fontSize="20" fill="#777" fontFamily="DejaVu Sans">ε</text><path d="M12 12H23L19 17V22L16 21V17Z" fill="#ddd" stroke="#999" /></g>,
  removeLayer: <><rect x="3" y="2" width="17" height="17" fill="none" stroke="#777" strokeWidth="1.6" /><rect x="15" y="16" width="9" height="7" rx="2" fill="#e04a4a" /><path d="M17 19.5H22" stroke="#fff" strokeWidth="1.7" /></>,
  gears: <><g fill="none" strokeDasharray="2.2 1.9"><circle cx="8" cy="7" r="5.5" stroke="#cf2020" strokeWidth="3" /><circle cx="18" cy="13" r="4" stroke="#777" strokeWidth="2.5" /><circle cx="11" cy="19" r="3" stroke="#8bb2e0" strokeWidth="2.5" /></g><circle cx="8" cy="7" r="3.5" fill="none" stroke="#cf2020" strokeWidth="3" /><circle cx="18" cy="13" r="2.3" fill="none" stroke="#777" strokeWidth="2" /><Caret /></>,
  pythonDd: <><Python /><Caret /></>,
  doc: <><Sheet x={2.5} /><path d="M7 9H17M7 12H17M7 15H17M7 18H14" stroke="#999" strokeWidth="1.3" /></>,
  noteEdit: <><rect x="2" y="3" width="16" height="14" fill="#fbe14a" stroke="#c9a400" strokeWidth="1.3" /><path d="M22 8L15 21L12 22L13 18Z" fill="#e9c74a" stroke="#777" /></>,
  wrench: <Wrench />,
  wrenchDd: <><Wrench /><Caret /></>,
  form: <g opacity=".4"><rect x="2" y="2" width="20" height="20" fill="#eee" stroke="#aaa" /><path d="M5 8H10M5 16H10" stroke="#999" strokeWidth="1.5" /><rect x="13" y="6" width="7" height="4" fill="#fff" stroke="#aaa" /><rect x="13" y="14" width="7" height="4" fill="#fff" stroke="#aaa" /></g>,
  treeStar: <><Tree /><path d="M8 0L10.5 5L16 6L12 10L13 15L8 12.5L3 15L4 10L0 6L5.5 5Z" fill="#ffd21a" stroke="#e08a10" /></>,
  copyDim: <g opacity=".35"><Sheet x={7} y={1} s={0.8} /><Sheet x={1} y={6} s={0.8} /><path d="M5 13H12M5 16H12M5 19H12" stroke="#777" /></g>,
  printer: <g opacity=".4"><path d="M6 2H18V8H6Z" fill="#fff" stroke="#999" /><rect x="1" y="8" width="22" height="9" rx="2" fill="#aaa" /><path d="M6 14H18V21H6Z" fill="#eee" stroke="#999" /></g>,
  identifySel: <><rect x="2" y="2" width="20" height="20" fill="none" stroke="#777" strokeWidth="1.5" strokeDasharray="3 2" /><circle cx="9" cy="9" r="7.5" fill="#5f8fc6" /><text x="7" y="14" fontSize="13" fontStyle="italic" fontWeight="700" fill="#fff" fontFamily="Liberation Serif">i</text><Pointer /></>,
  qgis: <QLogo />,
  db: <g fill="#f3f3f3" stroke="#808583" strokeWidth="1.4"><path d="M3 5V20C3 23.5 21 23.5 21 20V5" /><path d="M3 15C3 18.5 21 18.5 21 15M3 10C3 13.5 21 13.5 21 10" fill="none" /><ellipse cx="12" cy="5" rx="9" ry="3" /></g>,
  poly: <path d="M1.5 6C1 2.500 4 2 7 4.500C10 6.500 14 5.500 18 3.500C21.500 2 23 3.500 23 7V12C23 16 21 16.500 18 14.500C14 12.500 10 13.500 7 16C4 18.500 1.500 17 1.500 13Z" fill="#e3e6e4" stroke="#858b88" strokeWidth="1.400" />,
  line: <><path d="M2.5 6L8.5 20L16 3.5H22" fill="none" stroke="#7d827f" strokeWidth="1.3" /><g fill="#fff" stroke="#7d827f" strokeWidth="1.3"><circle cx="2.5" cy="5.5" r="1.6" /><circle cx="8.5" cy="20" r="1.6" /><circle cx="16.5" cy="2.5" r="1.6" /><circle cx="22" cy="2.5" r="1.5" /></g></>,
  points: <g fill="#fff" stroke="#7d827f" strokeWidth="1.3"><circle cx="19" cy="4" r="1.6" /><circle cx="8.5" cy="9" r="1.6" /><circle cx="5.5" cy="19" r="1.6" /></g>,
  raster: <Raster />,
  lens: <><circle cx="10" cy="9.5" r="7.5" fill="none" stroke="#777" strokeWidth="1.5" /><path d="M15.5 15L22 22" stroke="#777" strokeWidth="2.5" /></>,
  extents: <g fill="none" stroke="#222" strokeWidth="1.8"><path d="M3 3L13 11M6 2L15 9M3 6L12 13M3 3V7L8 11" /><circle cx="13" cy="10" r="4" /><circle cx="13" cy="17" r="5" /><path d="M14 6L21 2M10 16L14 20" /></g>,
  lock: <><path d="M6.5 11V7C6.5 1 17.5 1 17.5 7V11" fill="none" stroke="#888" strokeWidth="2.6" /><rect x="4" y="10.5" width="16" height="12.5" rx="1.5" fill="#666" /></>,
  crs: <><path d="M12 2C5 2 1 8 1 11H23C23 8 19 2 12 2ZM3 13C4 18 8 22 12 22S20 18 21 13Z" fill="#666" /><path d="M12 2V22M7 4C5 9 6 17 8 20M17 4C19 9 18 17 16 20M3 7H21M4 16H20" stroke="#e5e5e5" fill="none" /></>,
  chat: <><path d="M12 2.5C18.5 2.5 23.5 6 23.5 11C23.5 14 22 16 20 17.5L22 23L15 19.3C6 20.5 .5 16.5 .5 11C.5 6 5.5 2.5 12 2.5Z" fill="#555" /><circle cx="7" cy="11" r="1.7" fill="#fff" /><circle cx="12" cy="11" r="1.7" fill="#fff" /><circle cx="17" cy="11" r="1.7" fill="#fff" /></>,
};

const Icon = ({ n, className = "size-6" }: { n: string; className?: string }) => (
  <svg viewBox="0 0 24 24" className={`shrink-0 ${className}`}>{icons[n]}</svg>
);

/* ------------------------------------------------------------------ */
/* Toolbars                                                            */
/* ------------------------------------------------------------------ */

const Tri = ({ className = "border-t-[#555]" }: { className?: string }) => (
  <span className={`size-0 shrink-0 border-x-5 border-t-[5px] border-x-transparent ${className}`} />
);

/* "|" grip, "," separator, "v" drop-down arrow, "v-" dimmed arrow, "+x" pressed button, "~x" dimmed icon */
const Tools = ({ list }: { list: string }) => (
  <>
    {list.split(" ").map((k, i) => {
      if (k === "|")
        return (
          <span key={i} className="flex w-[18px] shrink-0 justify-center pl-[5px]">
            <span className="h-[17px] w-[4px] bg-[radial-gradient(circle,#b5b5b5_0.7px,transparent_1px)] bg-[length:2.5px_3px]" />
          </span>
        );
      if (k === ",") return <span key={i} className="ml-[3px] mr-[4px] h-[28px] w-px shrink-0 bg-[#d0d0d0]" />;
      if (k === "v" || k === "v-")
        return (
          <span key={i} className="flex w-[15px] shrink-0 justify-center">
            <Tri className={k === "v" ? "border-t-[#555]" : "border-t-[#a5a5a5]"} />
          </span>
        );
      const on = k[0] === "+";
      const dim = k[0] === "~";
      return (
        <span key={i} className={`flex shrink-0 justify-center ${k === "pencils" ? "w-[31px]" : "w-[33px]"}`}>
          <span className={`flex size-[31px] shrink-0 items-center justify-center rounded-[3px] ${on ? "border border-[#b4b4b4] bg-[#dcdcdc]" : ""} ${dim ? "opacity-40 grayscale-[70%]" : ""}`}>
            <Icon n={on || dim ? k.slice(1) : k} />
          </span>
        </span>
      );
    })}
  </>
);

const Bar = ({ children }: { children: ReactNode }) => (
  <div className="flex h-[39px] shrink-0 items-center overflow-hidden border-b border-[#b4b4b4] bg-linear-to-b from-[#fcfcfc] to-[#ececec]">
    <span className="-ml-[3.5px]" />
    {children}
  </div>
);

const Spin = () => (
  <span className="flex h-full w-[16px] flex-col items-center justify-center gap-[4px] border-l border-[#b4b4b4]">
    <span className="size-0 border-x-[4.5px] border-b-[5px] border-x-transparent border-b-[#666]" />
    <span className="size-0 border-x-[4.5px] border-t-[5px] border-x-transparent border-t-[#666]" />
  </span>
);

/* ------------------------------------------------------------------ */
/* Panels                                                              */
/* ------------------------------------------------------------------ */

const DockTitle = ({ title, className }: { title: string; className: string }) => (
  <div className={`flex shrink-0 items-center ${className}`}>
    <span className="flex-1 text-[15px] tracking-[-0.3px] text-[#1a1a1a]">{title}</span>
    <svg viewBox="0 0 26 12" className="mb-[2px] h-[12px] w-[26px]" fill="none" stroke="#666" strokeWidth="1.1">
      <rect x="1" y="1" width="10" height="10" rx="2" />
      <path d="M3.5 4.5H7.5V8.5H3.5ZM5.5 4.5V3H9V6.5H7.5" />
      <rect x="15" y="1" width="10" height="10" rx="2" />
      <path d="M17.5 3.5L22.5 8.5M22.5 3.5L17.5 8.5" strokeWidth="2" />
    </svg>
  </div>
);

const SmallTools = ({ list, className = "" }: { list: string; className?: string }) => (
  <div className={`flex shrink-0 items-center ${className}`}>
    {list.split(" ").map((k, i) =>
      k === "," ? (
        <span key={i} className="mx-[3.5px] h-[12px] w-px bg-[#cfcfcf]" />
      ) : k === "v" || k === "v-" ? (
        <span key={i} className="flex w-[14px] justify-center"><Tri className={k === "v" ? "border-t-[#555]" : "border-t-[#aaa]"} /></span>
      ) : (
        <span key={i} className="flex w-[25px] justify-center">
          <span className={`-mx-1 flex size-[23px] shrink-0 items-center justify-center rounded-[3px] ${k[0] === "+" ? "border border-[#b0b0b0] bg-[#dcdcdc]" : ""}`}>
            <Icon n={k.replace("+", "")} className="size-[16px]" />
          </span>
        </span>
      ),
    )}
  </div>
);

const Arrow = ({ open }: { open?: boolean }) =>
  open ? (
    <span className="block size-0 border-x-[4.5px] border-t-[5px] border-x-transparent border-t-[#555]" />
  ) : (
    <span className="block size-0 border-y-[4.5px] border-l-[5px] border-y-transparent border-l-[#555]" />
  );

const VScroll = ({ top, thumb }: { top: string; thumb: string }) => (
  <div className="flex w-[18px] shrink-0 flex-col border-l border-[#b8b8b8] bg-[#e4e4e4]">
    <div className="flex h-[17px] shrink-0 items-center justify-center border-b border-[#b8b8b8] bg-[#f8f8f8]">
      <span className="size-0 border-x-5 border-b-[5px] border-x-transparent border-b-[#555]" />
    </div>
    <div className={top} />
    <div className={`border-b border-[#b8b8b8] bg-linear-to-r from-[#fdfdfd] to-[#f0f0f0] ${thumb}`} />
    <div className="flex-1" />
    <div className="flex h-[17px] shrink-0 items-center justify-center border-t border-[#b8b8b8] bg-[#f8f8f8]"><Tri /></div>
  </div>
);

const Dots = () => (
  <div className="flex h-[7px] shrink-0 items-center justify-center">
    <span className="h-[2px] w-[18px] bg-[radial-gradient(circle,#aaa_0.7px,transparent_1px)] bg-[length:3px_2px]" />
  </div>
);

const browserRows: [string, string][] = [
  ["poly", "building_polygons"], ["line", "coastline_lines"], ["line", "contour_lines"], ["points", "elevation_points"],
  ["points", "geodetic_points"], ["line", "rivers_lines"], ["line", "roads_lines"], ["line", "vegetation_lines"],
  ["poly", "vegetation_polygons"], ["poly", "water_polygons"],
];

const BrowserPanel = () => (
  <>
    <DockTitle title="Браузер" className="h-[22px] pl-1 pr-[1px]" />
    <SmallTools list="addLayer refresh funnel treeUp info" className="h-[28px] pb-[4px] pl-[4px]" />
    <div className="flex h-[303px] shrink-0 border border-[#b8b8b8] bg-white">
      <div className="min-w-0 flex-1 overflow-hidden text-[15px] leading-[22px] tracking-[-0.27px]">
        <div className="flex h-[22px] items-center pl-[23px]"><span className="w-[15px]"><Arrow /></span><Icon n="qgis" className="size-[19px]" /><span className="pl-[7px]">Ex06_Entin</span></div>
        <div className="flex h-[22px] items-center pl-[21px]"><span className="w-[17px]"><Arrow open /></span><Icon n="db" className="size-[18px]" /><span className="pl-[8px]">Ex06_topo_Entin.gpkg</span></div>
        {browserRows.map(([ic, t], i) => (
          <div key={t} className={`mr-[28px] flex h-[22px] items-center pl-[40px] ${i === 0 ? "bg-[#efefef]" : ""}`}>
            <span className="w-[14px]"><Arrow /></span><Icon n={ic} className="size-[21px]" /><span className="pl-[5px]">{t}</span>
          </div>
        ))}
        {["n46-005.jpg", "n46-005_modified.tif"].map((t) => (
          <div key={t} className="flex h-[22px] items-center pl-[37px]"><Icon n="raster" className="size-[20px]" /><span className="pl-[6px]">{t}</span></div>
        ))}
      </div>
      <VScroll top="h-[20px] border-b border-[#b8b8b8]" thumb="h-[91px]" />
    </div>
  </>
);

type Layer = { t: string; sw?: ReactNode; arrow?: "open" | "closed"; lvl?: number; on?: boolean; cls?: string };

const Swatch = ({ className }: { className: string }) => <span className={`block ${className}`} />;

const layers: Layer[] = [
  { t: "Отметки высот", on: true, sw: <Swatch className="mx-auto size-[3px] rounded-full bg-[#222]" /> },
  { t: "Геодезические пункты", on: true, sw: <svg viewBox="0 0 10 9" className="mx-auto h-[9px] w-[10px]"><path d="M5 .8L9.3 8.3H.7Z" fill="#fff" stroke="#555" /><circle cx="5" cy="5.5" r="1" fill="#222" /></svg> },
  { t: "Автодороги", on: true, arrow: "closed", sw: <Icon n="line" className="size-[21px]" /> },
  { t: "Береговая линия", on: true, sw: <Swatch className="h-[2px] w-[19px] bg-[#6f9ee5]" /> },
  { t: "Реки и ручьи", on: true, sw: <Swatch className="h-[2px] w-[19px] bg-[#6f9ee5]" /> },
  { t: "Здания и сооружения", on: true, sw: <Swatch className="size-[19px] bg-black" /> },
  { t: "Границы растительности", on: true, sw: <span className="flex gap-[2px]"><Swatch className="size-[3px] bg-black" /><Swatch className="size-[3px] bg-black" /><Swatch className="size-[3px] bg-black" /><Swatch className="size-[3px] bg-black" /></span> },
  { t: "Горизонтали", on: true, arrow: "open", cls: "underline underline-offset-2", sw: <Icon n="line" className="size-[21px]" /> },
  { t: "основные", on: true, lvl: 1, sw: <Swatch className="h-[2px] w-[19px] bg-[#e8d3c0]" /> },
  { t: "утолщенные", on: true, lvl: 1, sw: <Swatch className="h-[2px] w-[19px] bg-[#cfa681]" /> },
  { t: "", on: true, lvl: 1, sw: <Swatch className="h-[5px] w-[19px] bg-[#dfe76b]" /> },
  { t: "Водохранилище", on: true, sw: <Swatch className="size-[19px] border border-[#6d9ad8] bg-[#a6bddb]" /> },
  { t: "Растительность и грунты", on: true, sw: <Swatch className="size-[19px] bg-[#bfdc8b]" /> },
  { t: "n46-005_modified", on: false, arrow: "open", cls: "italic text-[#808080]", sw: <span className="flex w-full justify-center"><Icon n="raster" className="size-[20px]" /></span> },
  { t: "Канал 1 (Red)", lvl: 2, sw: <Swatch className="size-[17px] bg-[#f00]" /> },
  { t: "Канал 2 (Green)", lvl: 2, sw: <Swatch className="size-[17px] bg-[#0f0]" /> },
  { t: "Канал 3 (Blue)", lvl: 2, sw: <Swatch className="size-[17px] bg-[#00f]" /> },
];

const Check = ({ on, className = "" }: { on?: boolean; className?: string }) => (
  <span className={`flex size-[17px] shrink-0 items-center justify-center border border-[#b4b4b4] bg-white ${className}`}>
    {on && <svg viewBox="0 0 12 12" className="size-[13px]"><path d="M2 6.5L4.8 10L10 1.5" fill="none" stroke="#000" strokeWidth="1.9" /></svg>}
  </span>
);

const LayersPanel = () => (
  <>
    <DockTitle title="Слои" className="h-[20px] pl-1 pr-[1px]" />
    <SmallTools list="brush group eyeDd funnelDd epsFilter v- treeDown treeUp removeLayer" className="h-[27px] pl-[4px]" />
    <div className="mt-[3px] h-[406px] shrink-0 overflow-hidden border border-[#b8b8b8] bg-white pt-px text-[15px] leading-[22px] tracking-[-0.15px]">
      {layers.map((l, i) => (
        <div key={i} className={`flex h-[22px] items-center ${l.lvl ? "pl-[53px]" : "pl-[9px]"}`}>
          {!l.lvl && <span className="flex w-[19px] shrink-0">{l.arrow && <Arrow open={l.arrow === "open"} />}</span>}
          {l.lvl !== 2 && <Check on={l.on} />}
          <span className={`flex h-full shrink-0 items-center ${l.lvl === 2 ? "w-[23px]" : "ml-[6px] w-[21px]"}`}>{l.sw}</span>
          {l.lvl === 1 ? (
            <span className={`ml-[2px] h-[22px] flex-1 pl-[1px] leading-[20px] ${i === 9 ? "rounded-[2px] border border-[#b5d8f0] bg-linear-to-b from-[#f8fcff] to-[#eaf5fd]" : "border border-transparent"}`}>{l.t}</span>
          ) : l.lvl ? (
            <span className="whitespace-nowrap">{l.t}</span>
          ) : (
            <span className={`whitespace-nowrap pl-[4px] font-bold ${l.on ? "text-[14.5px] tracking-[-0.62px]" : "text-[15px] tracking-[0.35px]"} ${l.cls ?? ""}`}>{l.t}</span>
          )}
        </div>
      ))}
    </div>
  </>
);

const algorithms = [
  "Недавно использованные", "Анализ растров", "Вектор - Анализ", "Вектор - Выборка", "Вектор - Геометрия", "Вектор - общие инструменты",
  "Вектор - Создание", "Вектор - Таблица атрибутов", "Векторные тайлы", "Графики и диаграммы", "Инструменты пространственных операций",
  "Интерполяция", "Картография", "",
];

const RightDock = () => (
  <aside className="flex w-[471px] shrink-0 flex-col">
    <DockTitle title="Инструменты анализа" className="h-[22px] pl-1 pr-[1px]" />
    <SmallTools list="gears pythonDd clock doc , noteEdit , wrench" className="h-[28px] pb-[4px] pl-[4px]" />
    <div className="flex h-[26px] shrink-0 items-center rounded-[2px] border border-[#b0b0b0] bg-white pl-[9px] font-['DejaVu_Sans_Condensed','DejaVu_Sans',sans-serif] text-[12.5px] text-[#808080]">
      <Icon n="lens" className="size-[17px]" /><span className="pl-[7px] tracking-[-0.2px]">Поиск...</span>
    </div>
    <div className="flex h-[292px] shrink-0 border border-[#b8b8b8] bg-white">
      <div className="min-w-0 flex-1 overflow-hidden text-[15px] leading-[22px] tracking-[-0.36px]">
        {algorithms.map((t, i) => (
          <div key={i} className={`flex h-[22px] items-center pl-[10px] ${i === 5 ? "bg-[#efefef]" : ""}`}>
            <span className="w-[19px]"><Arrow /></span><Icon n={i === 0 ? "clock" : "qgis"} className="size-[19px]" /><span className="pl-[6px]">{t}</span>
          </div>
        ))}
      </div>
      <VScroll top="h-0" thumb="h-[108px]" />
    </div>
    <div className="h-[36px] shrink-0 border-2 border-[#3c78b8] bg-[#55aaff] pl-[3px] font-['DejaVu_Sans_Condensed','DejaVu_Sans',sans-serif] text-[12.4px] leading-[16px] text-white">
      <p>Вы можете добавить алгоритмы в панель, <u className="text-[#0000f0]">разрешив дополнительные</u></p>
      <p><u className="text-[#0000f0]">источники.</u><u className="ml-[12px] text-[#0000f0]">[close]</u></p>
    </div>
    <Dots />
    <DockTitle title="Результат определения" className="h-[22px] pl-1 pr-[1px]" />
    <SmallTools list="form , treeDown treeUp +treeStar , deselect , copyDim printer , identifySel v wrenchDd , book" className="h-[28px] pb-[4px] pl-[3px]" />
    <div className="flex h-[285px] shrink-0 flex-col border border-[#b8b8b8] bg-white text-[15px] tracking-[-0.2px]">
      <div className="flex h-[24px] shrink-0 items-center border-b border-[#a8a8a8] bg-linear-to-b from-[#fafafa] to-[#ececec]">
        <span className="w-[391px] border-r border-[#c8c8c8] pl-[2px]">Объект</span><span className="pl-[2px]">Значение</span>
      </div>
      <div className="flex-1" />
      <div className="flex h-[18px] border-t border-[#b8b8b8] bg-[#e4e4e4]">
        <span className="flex w-[17px] items-center justify-center border-r border-[#b8b8b8] bg-[#f8f8f8]"><span className="size-0 border-y-5 border-r-[5px] border-y-transparent border-r-[#555]" /></span>
        <span className="w-[396px] border-r border-[#b8b8b8] bg-linear-to-b from-white to-[#f0f0f0]" />
        <span className="flex-1" />
        <span className="flex w-[17px] items-center justify-center border-l border-[#b8b8b8] bg-[#f8f8f8]"><span className="size-0 border-y-5 border-l-[5px] border-y-transparent border-l-[#555]" /></span>
      </div>
    </div>
    <div className="mt-[5px] flex h-[28px] shrink-0 items-center pl-[5px] pr-[5px] font-['DejaVu_Sans_Condensed','DejaVu_Sans',sans-serif] text-[12.5px]">
      <span className="w-[45px]">Режим</span>
      <span className="flex h-[28px] flex-1 items-center justify-between rounded-[3px] border border-[#aaa] bg-linear-to-b from-[#fdfdfd] to-[#ededed] pl-[4px] pr-[9px]">Текущий слой<Tri /></span>
    </div>
    <div className="mt-[7px] flex h-[24px] shrink-0 items-center pl-[5px] font-['DejaVu_Sans_Condensed','DejaVu_Sans',sans-serif] text-[12.5px] text-[#8a8a8a]">
      <span className="w-[96px]">Представление</span>
      <span className="flex h-[24px] w-[79px] items-center justify-between rounded-[3px] border border-[#b8b8b8] bg-linear-to-b from-[#fafafa] to-[#eee] pl-[4px] pr-[9px]">Дерево<Tri className="border-t-[#aaa]" /></span>
    </div>
  </aside>
);

/* ------------------------------------------------------------------ */
/* Map canvas                                                          */
/* ------------------------------------------------------------------ */

type Pt = [number, number];

/* The map is digitised in five sheets, each with its own origin. */
const sheet = (ox: number, oy: number) => (s: string): Pt[] =>
  s.trim().split(/\s+/).map((p) => {
    const [x, y] = p.split(",").map(Number);
    return [x + ox, y + oy];
  });
const TOP = sheet(240, -450);
const NW = sheet(0, 30);
const NE = sheet(840, 0);
const SW = sheet(30, 720);
const SE = sheet(840, 660);

const smooth = (p: Pt[], closed = false) => {
  const n = p.length;
  const at = (i: number) => (closed ? p[(i + n) % n] : p[Math.max(0, Math.min(n - 1, i))]);
  let d = `M${p[0][0]} ${p[0][1]}`;
  for (let i = 0; i < (closed ? n : n - 1); i++) {
    const [a, b, c, e] = [at(i - 1), at(i), at(i + 1), at(i + 2)];
    d += `C${b[0] + (c[0] - a[0]) / 6} ${b[1] + (c[1] - a[1]) / 6} ${c[0] - (e[0] - b[0]) / 6} ${c[1] - (e[1] - b[1]) / 6} ${c[0]} ${c[1]}`;
  }
  return closed ? d + "Z" : d;
};
const straight = (p: Pt[]) => "M" + p.map(([x, y]) => `${x} ${y}`).join("L");

const northShore: Pt[] = [
  ...NW("289,292 287,270 295,250 310,243 330,255 350,273 370,281 400,286 430,293 490,296 540,293 590,285 645,283 652,275 655,252 675,272 690,288 750,294 800,308 855,321 865,315 870,295 878,281 887,292 881,320 885,337 900,342"),
  ...NE("70,376 110,385 150,398 165,392 177,376 176,405 185,430 230,455 262,474 280,477 300,472 318,466 317,476 300,490 302,508 320,520 370,548 430,578 465,588 480,602 497,611 525,611 575,605 615,613 655,628 672,618 683,600 688,570 700,550 715,538 723,545 730,567 740,580 750,612 770,625 780,632 805,630 830,638 850,638 865,625 871,600"),
];
const eastCoast = SE(
  "415,702 440,685 465,655 485,620 505,585 522,555 527,525 518,505 495,492 460,486 400,480 345,475 334,463 345,456 400,454 470,448 505,437 522,420 527,400 522,378 510,365 503,352 530,345 560,328 575,308 590,285 620,265 680,210 735,155 738,135 722,115 690,95 640,75 575,60 500,50 465,42 450,32 432,25 418,32 400,55 382,72 330,72 295,80 285,75 284,66 300,62 335,57 358,40 373,15",
);
const southShore: Pt[] = [
  ...NE("373,675 372,662 360,656 340,652 310,625 265,600 205,552 180,530 150,512 115,498 60,470 20,462 0,440"),
  ...NW("860,433 845,418 830,400 790,375 740,361 705,367 695,372 683,383 665,360 650,349 600,343 535,345 480,358 435,363 400,357 370,338 330,315 289,292"),
];
const southCoast = SE("75,665 80,700 85,725 105,760 125,793 160,815 200,827 300,827 370,820 400,803 422,780 424,755 415,737 400,722 380,708 382,702 415,702");

const thin: Pt[][] = [
  NW("453,554 510,554 540,549 550,535 551,490 558,472 570,468 582,478 583,530 592,550 650,550 700,522 742,505 765,520 788,553 785,568 740,580 700,610 668,640 680,650 740,655 800,680 850,710 870,733 850,742 800,748"),
  NW("453,564 530,563 562,549 600,566 650,560 700,538 727,532 738,545 700,577 660,615 640,637 565,662 540,645 490,605"),
  NW("456,573 500,580 560,573 640,565 645,577 610,612 572,628 520,612 485,603 465,608 450,617 442,612"),
  NW("560,500 567,487 575,500 567,518 560,500"),
  NW("530,590 548,577 570,592 550,604 530,590"),
  NW("441,627 455,631 480,618 500,622 530,642 565,662"),
  NW("441,640 455,651 490,632 515,650 550,683 600,671 618,680 622,722 680,726 710,722 735,748"),
  NW("444,683 460,688 482,672 505,682 535,710 560,715 568,740 562,750"),
  NW("445,705 460,710 478,698 500,705 528,730 548,735 552,750"),
  NW("450,718 466,728 482,715 500,722 520,740"),
  NW("453,745 480,744 500,750"),
  NW("637,668 650,662 690,670 760,680 798,700 800,712 770,722 765,738 740,742 712,718 660,705 640,690 637,668"),
  NW("860,675 880,690 900,702"),
  [...SW("418,15 430,18 450,5 485,20 530,60 565,75 630,75 645,100 700,125 720,140 718,165 670,185 660,205 700,245 760,232 780,240 782,278 860,280 870,255"), ...SE("90,312 115,300 130,270 200,270 260,255 300,205 290,195 200,200 130,190 80,180 70,150 95,110 60,48")],
  [...SW("418,30 440,32 465,25 500,45 540,80 610,90 625,110 640,135 680,140 692,160 650,175 645,205 690,255 755,265 760,335 800,340 808,305 865,312"), ...SE("75,350 110,335 140,320 180,330 182,320 240,320 300,320 340,290")],
  [...SW("425,55 470,50 510,75 560,98 605,110 612,130 660,150 668,158 635,180 640,225 700,270 740,290 745,340 810,422 840,425 842,390 825,330 835,328 880,345 900,345"), ...SE("120,360 125,400 180,390 185,372 235,380 240,340 290,345 330,335 370,330")],
  SW("445,5 470,0 500,10"),
  SW("478,55 520,85 590,110 600,135 630,165 625,200 640,240 690,275 725,290 730,345 800,425 865,450 870,480 900,520"),
  SW("480,75 545,115 585,128 600,160 625,185 630,245 660,285 715,298 722,350 790,430 855,460"),
  SW("513,140 540,135 555,165 590,220 600,250 650,310 690,325 700,370 760,440 825,470 835,500 900,590"),
  SW("513,140 520,165 555,220 565,265 550,292 510,288 435,270"),
  SW("600,275 640,320 685,345 695,385 745,440 820,485 830,510 900,610"),
  SW("430,85 427,90 450,110 490,150 515,190 520,225 510,240 480,240 435,220"),
  SW("427,113 470,150 497,190 495,220 470,232 430,232"),
  SW("427,138 460,165 475,190 475,212 455,220 427,208"),
  SW("427,150 445,165 462,190 450,205 425,203"),
  SW("430,160 440,175 447,198"),
  SW("430,245 480,262 520,260"),
  SW("415,300 440,295 480,305 530,300 580,322 600,320 602,290 612,275"),
  SW("420,305 422,330 440,340 490,335 560,345 620,385 630,420 660,450 663,480 645,500 660,540 740,558 765,590"),
  SW("424,383 450,365 490,352 540,352 590,370 615,430 640,460 637,490 610,530 650,550 735,575 752,595"),
  SW("424,432 470,390 520,380 555,395 575,430 605,470 605,500 580,535 545,550 580,575 658,592"),
  SW("424,465 470,415 515,408 545,430 552,455 575,480 570,510 510,545 510,560 560,590 625,600"),
  SW("424,490 470,435 505,427 525,440 535,475 545,490 535,510 485,545 478,565 490,585 530,598"),
  SW("430,518 455,480 485,465 515,480 520,500 500,520 465,550 455,580 460,595 475,603"),
  SW("760,120 775,115 800,128 815,150 805,160 780,155 760,135 760,120"),
  SW("900,80 880,95 878,108 900,122"),
  SE("0,60 25,85 30,105 10,118 0,115"),
  SE("20,45 60,60 90,105 75,140 68,165 90,180 170,185 250,190 300,195"),
  SE("55,45 100,85 122,105 115,135 95,160 110,175 180,165 260,175 335,180"),
  SE("100,58 145,90 150,105 135,130 125,155 150,160 250,155 330,160"),
  SE("130,52 175,75 195,90 190,110 160,120 150,135 170,150 260,148 340,150"),
  SE("180,45 225,75 238,95 225,110 215,122 260,125 350,120 400,130 440,95 520,90 565,100 580,115 575,150 560,175"),
  SE("0,198 5,205 0,215"),
  SE("140,290 180,260 200,258"),
  SE("425,150 400,160 390,180 410,175 440,155"),
  SE("515,205 490,220 490,250 475,275 440,290 410,330 440,360 443,390 430,408 380,405 310,400 280,405 270,430 230,435 200,460 150,470 148,478 180,490"),
  SE("0,410 30,450 35,475 20,490 0,480"),
  SE("45,430 60,480 100,510 180,540 230,560 232,570 200,630 185,645 150,650 120,630 50,560 60,520 55,480"),
  SE("78,545 90,537 160,545 172,570 135,610 120,600 80,565 78,545"),
  SE("170,740 185,725 205,730 208,750 190,767 170,758 170,740"),
  SE("0,510 20,530 25,560 90,650"),
  SE("0,525 12,545 15,580 90,665"),
  SE("415,190 430,215 420,250 440,280"),
  SE("0,430 40,420 60,410 130,415 150,395 180,390"),
];
const thick: Pt[][] = [
  [...NW("442,660 455,667 480,656 500,661 545,702 578,697 587,708 577,735 590,747"), ...SW("570,60 650,55 662,85 690,110 735,116 737,140 742,168 725,182 690,190 684,210 700,230 718,233 785,207 800,213 830,223"), ...SE("60,285 95,283 130,262 155,245 160,225 130,210 60,200 30,175 0,157"), ...SW("808,95 808,82 840,65 868,48"), ...NW("897,720 865,700 800,670 735,640 718,622 750,597 800,588 900,588"), ...NE("100,624")],
  [...SW("428,85 435,72 475,70 520,100 573,125 580,145 612,175 615,215 650,268 708,298 713,355 745,390 780,430 845,458 848,490"), ...SE("90,630 143,675 148,710 145,750 160,780 185,792 220,780 280,782 292,770 270,740 265,690 235,645 265,605 297,565 280,537 205,518 130,497 80,470 68,450 110,437 165,438 180,415 250,420 255,366 330,370 370,363 385,345 375,320 400,295 440,265 455,230 455,190")],
  SW("430,90 480,135 530,205 540,240 530,268 505,270 435,247"),
  SW("424,410 450,378 490,362 540,363 575,385 590,430 627,480 620,505 578,545 610,565 680,583 718,590 737,605"),
  SE("145,48 200,75 218,95 205,115 170,130 180,138 350,133 390,145 450,108 500,102 520,115 520,135 490,165 455,200 455,225"),
  SE("0,50 40,70 60,95 55,120 30,138 0,135"),
  SE("35,520 38,560 90,620"),
  SW("900,375 880,380 875,400 900,425"),
];

const rivers: Pt[][] = [
  SW("332,79 370,77 432,79 485,104 520,133 550,175 575,230 600,282 615,300 630,308 638,330 645,365 675,400 690,407 712,440"),
  SW("12,323 65,268 100,253 160,246 212,248 262,263 318,265 370,275 400,288 437,310 515,313 580,335 605,350 630,356 645,365"),
  SW("46,517 95,489 133,475 185,470 245,461 310,443 355,420 388,388 437,310"),
  SW("470,570 575,541 655,505 690,498 724,488"),
  SW("712,440 704,450 705,470 724,488 780,555 815,608 850,648 867,688 869,706"),
  NE("342,106 338,155 328,205 315,235 300,255 228,306 178,375"),
  SE("18,397 45,425 75,447 120,468 180,479 240,473 300,466 335,466"),
  [...NW("840,625 880,625"), ...NE("45,655 110,667 210,700 250,708 290,724")],
  [...TOP("328,0 327,60 337,120 354,178 378,222 400,272 404,330 405,475 398,530 394,570"), ...NW("634,110 636,160 648,210 655,252")],
  [...TOP("597,260 622,300 650,345 673,390 691,458 690,520"), ...NE("86,150 70,230 50,290 42,315")],
];
const roads: Pt[][] = [
  NE("394,42 397,75 403,100 415,127 455,164 500,178 550,170 600,148 640,138 660,138 675,150 678,170 668,200 652,230 652,308 615,370 570,415 548,445 547,468 555,480 568,480 585,468 640,405 675,370 730,290 755,240 800,185 830,135 855,104"),
];
const clearings: Pt[][] = [
  NW("740,78 735,78 700,99 660,101 652,110 655,125 690,165 715,200 713,230 700,260 690,290 758,298 760,250 745,180 738,130 740,100"),
  NE("800,310 774,304 740,330 722,365 722,390 738,405 760,385 775,370 790,354"),
  NE("585,198 610,193 626,198 625,225 610,255 592,260 583,245 580,215"),
  SE("205,239 185,243 150,262 130,285 128,297 140,310 160,310 182,300 195,320 205,335 220,337 235,320 232,310 215,290 218,260"),
  SE("357,212 320,235 303,270 300,305 308,340 308,395 318,400 345,375 380,345 400,310 435,285 442,270 425,245 405,238 385,248 382,280 360,310 335,335 330,300 340,265 358,240"),
  SE("540,122 575,125 600,140 640,145 700,135 718,145 715,160 690,170 660,210 620,240 590,255 560,270 550,250 575,215 580,200 550,170 535,140"),
];
const dotted: Pt[][] = [
  [...TOP("72,325 105,318 138,306 185,310 199,320 197,380 201,420 209,465 203,490 206,516 240,535 280,548 289,562"), ...NW("530,100 526,125 518,155 540,175 555,215 580,227 620,238 655,252")],
];

const Building = ({ x, y, w = 15, h = 13, r = 35 }: { x: number; y: number; w?: number; h?: number; r?: number }) => (
  <rect x={-w / 2} y={-h / 2} width={w} height={h} transform={`translate(${x} ${y}) rotate(${r})`} fill="#000" />
);
const Place = ({ x, y, w, children }: { x: number; y: number; w: number; children: string }) => (
  <text x={x} y={y} textLength={w} lengthAdjust="spacingAndGlyphs" fontSize="49" fontFamily="DejaVu Serif, serif" fill="#333" stroke="#fff" strokeWidth="14" strokeLinejoin="round" paintOrder="stroke">{children}</text>
);
const Height = ({ x, y, children }: { x: number; y: number; children: string }) => (
  <text x={x} y={y} textLength="70" lengthAdjust="spacingAndGlyphs" fontSize="32" fontFamily="Open Sans, sans-serif" fill="#333">{children}</text>
);

const MapCanvas = () => (
  <svg viewBox="465 171 976 815" className="h-full w-full">
    <g transform="translate(580 320) scale(.33333)" fill="none">
      <path fill="#bfdc8b" d={straight([...NW("528,118 530,135 520,155 540,178 553,212 575,225 620,235 655,252 690,300 900,380"), ...NE("300,540 600,640 774,640 774,117")])} />
      <path fill="#bfdc8b" d={straight([...NW("478,340 700,340 900,400"), ...NE("300,540 500,660"), ...SE("860,50 860,690 415,700"), ...[...southCoast].reverse(), ...SW("885,605 830,555 760,480 712,440 704,455 706,472 724,488 780,555 800,580 447,580")])} />
      <g fill="#fff">{clearings.map((c, i) => <path key={i} d={smooth(c, true)} />)}</g>
      <path fill="#a6bddb" d={smooth(northShore) + straight([northShore[northShore.length - 1], ...SE("877,700 415,702")]).replace("M", "L") + smooth(eastCoast).replace("M", "L") + smooth(southShore).replace("M", "L") + "Z"} />
      <path stroke="#5b93dc" strokeWidth="3" d={straight([...NE("871,600"), ...SE("877,700 415,702")])} />
      <g stroke="#b87828" strokeOpacity=".62" strokeWidth="2.6">{thin.map((c, i) => <path key={i} d={smooth(c)} />)}</g>
      <g stroke="#a85a0c" strokeWidth="3">{thick.map((c, i) => <path key={i} d={smooth(c)} />)}</g>
      <g stroke="#111" strokeWidth="4" strokeDasharray="4 4">
        {clearings.map((c, i) => <path key={i} d={i === 1 ? smooth(c.slice(1)) : i === 0 ? smooth([...c.slice(11), ...c.slice(0, 11)]) : smooth(c, true)} />)}
        {dotted.map((c, i) => <path key={i} d={smooth(c)} />)}
      </g>
      <g stroke="#1f69e0" strokeWidth="4">
        <path d={smooth(northShore)} /><path d={smooth([...eastCoast, ...southShore])} />
        <path d={smooth([...SW("712,440 760,480 830,555 875,600"), ...southCoast])} />
        {rivers.map((c, i) => <path key={i} d={smooth(c)} />)}
      </g>
      {roads.map((c, i) => <g key={i}><path d={smooth(c)} stroke="#2a1a08" strokeWidth="14" /><path d={smooth(c)} stroke="#e87800" strokeWidth="8.5" /></g>)}
      <g>
        <Building x={601} y={308} w={20} h={14} r={-5} />
        <Building x={1455} y={238} w={20} h={16} r={30} />
        <g transform="translate(840 660)">
          <Building x={643} y={125} /><Building x={590} y={152} /><Building x={576} y={178} /><Building x={606} y={178} /><Building x={622} y={158} />
          <Building x={657} y={162} /><Building x={681} y={150} w={17} h={16} /><Building x={638} y={181} />
          <Building x={566} y={234} w={26} h={82} /><Building x={595} y={238} w={18} h={36} />
          <path d="M555 268L632 158M566 268L640 168" stroke="#444" strokeWidth="2" />
          <Building x={469} y={567} /><Building x={486} y={576} /><Building x={454} y={589} /><Building x={471} y={597} />
          <Building x={509} y={562} w={14} h={20} r={0} /><Building x={353} y={804} w={20} h={15} r={-8} />
        </g>
        {[[1461, 263], [1341, 1193]].map(([x, y]) => (
          <g key={x}><path d={`M${x} ${y - 13}L${x + 12} ${y + 9}H${x - 12}Z`} fill="#fff" stroke="#333" strokeWidth="2.5" /><circle cx={x} cy={y + 1} r="3" fill="#000" /></g>
        ))}
        <circle cx="520" cy="184" r="4.5" fill="#000" /><circle cx="748" cy="739" r="4.5" fill="#000" />
      </g>
      <Height x={549} y={195}>471.9</Height>
      <Height x={777} y={751}>448.6</Height>
      <Height x={1491} y={277}>509.7</Height>
      <Height x={1371} y={1206}>254.4</Height>
      <Place x={484} y={271} w={100}>Д.О.</Place>
      <Place x={1337} y={202} w={94}>сар.</Place>
      <Place x={1177} y={853} w={197}>Шумиха</Place>
      <Place x={1050} y={1189} w={270}>пионерлаг.</Place>
      <Place x={1072} y={1425} w={101}>Д.О.</Place>
    </g>
  </svg>
);

/* ------------------------------------------------------------------ */
/* Window                                                              */
/* ------------------------------------------------------------------ */

const menus: [string, string][] = [
  ["Проект", "w-[65px]"], ["Правка", "w-[66px]"], ["Вид", "w-[41px]"], ["Слой", "w-[50px]"], ["Настройки", "w-[90px]"], ["Модули", "w-[69px]"],
  ["Вектор", "w-[63px]"], ["Растр", "w-[53px]"], ["База данных", "w-[103px]"], ["Интернет", "w-[81px]"], ["Меш", "w-[48px]"], ["Анализ данных", "w-[122px]"], ["Справка", "w-[70px]"],
];

const field = "flex h-[23px] shrink-0 items-center rounded-[3px] border border-[#b0b0b0]";

export default function App() {
  return (
    <div className="flex h-[1020px] w-[1920px] flex-col overflow-hidden bg-[#efefef] font-['Open_Sans','Noto_Sans',sans-serif] text-[#111]">
      <header className="relative flex h-[29px] shrink-0 items-center bg-[#f0f4fb] pl-[2px]">
        <Icon n="qgis" className="size-[20px]" />
        <span className="pl-[6px] text-[14px] tracking-[-0.1px]">*Ex06_Entin — QGIS</span>
        <span className="absolute left-[820px] top-0 h-[2px] w-[280px] rounded-b bg-[#e4e8ef]" />
        <svg viewBox="0 0 160 20" className="ml-auto mr-[20px] h-[20px] w-[160px]" fill="none" stroke="#111" strokeWidth="1.2">
          <path d="M25 9.5H37M142.500 5L153.500 16M153.500 5L142.500 16" />
          <rect x="84" y="6.5" width="9" height="9" rx="2" /><path d="M86.5 4.5H93Q95 4.5 95 6.5V13" />
        </svg>
      </header>
      <nav className="flex h-[25px] shrink-0 items-center border-b border-[#d0d0d0] pl-[11px] text-[15px] tracking-[-0.25px]">
        {menus.map(([m, w]) => <span key={m} className={`shrink-0 whitespace-nowrap ${w}`}>{m}</span>)}
      </nav>
      <Bar>
        <Tools list="| blank folder save layoutNew layouts style | hand panSel zoomIn zoomOut zoomFull zoomSel zoomLayer zoomNative zoomLast zoomNext mapNew map3d bookmarkNew bookmarks clock refresh | select v selectExp v deselect v selectLoc | +identify abacus +gear sigma table v measure v +tip action v- | book | python image terrain saga node qfield | delta globeAdd globeFind globeBin" />
      </Bar>
      <Bar>
        <Tools list="| dsm gpkg shp feather chip mesh virtual | label diagram , labPinBlue labRed , labPin labEye labMove labRot labEdit | topo cross | magnet veeSnap +veeOn" />
        <span className={`${field} w-[93px] justify-between pl-[4px] text-[14px] text-[#888]`}>12<Spin /></span>
        <span className={`${field} ml-[2px] w-[116px] justify-between pl-[4px] pr-[8px] text-[14px] tracking-[-0.3px] text-[#888]`}>пикс<Tri className="border-t-[#999]" /></span>
        <Tools list="topoGreen overlap xcross +trace" />
        <span className="-ml-px flex h-[31px] w-[14px] items-center justify-center rounded-[3px] border border-[#b4b4b4] bg-[#dcdcdc]"><Tri className="border-t-[#888]" /></span>
        <Tools list="selfSnap" />
      </Bar>
      <Bar>
        <Tools list="| ~arc v- ~circle v- ~ellipse v- ~rect v- ~polygon v- | pencils pencil ~saveEdit ~digLine v- ~shp ~vertexTool v- ~multiEdit ~trash ~cut ~copy ~paste ~undo ~redo | ~square ~veeMove v- ~fRotate ~fScale ~simplify ~ringAdd ~partAdd ~ringFill ~ringDel ~partDel ~reshape ~offset ~reverse ~trim ~split ~splitParts ~merge ~mergeAttr ~rotSym v- ~offSym" />
      </Bar>
      <div className="flex h-[816px] shrink-0">
        <aside className="flex w-[457px] shrink-0 flex-col">
          <BrowserPanel />
          <Dots />
          <LayersPanel />
        </aside>
        <div className="flex w-[7px] shrink-0 items-center justify-center"><span className="h-[18px] w-[2px] bg-[radial-gradient(circle,#aaa_0.7px,transparent_1px)] bg-[length:2px_3px]" /></div>
        <main className="w-[978px] shrink-0 border border-t-0 border-[#b0b0b0] bg-white"><MapCanvas /></main>
        <div className="flex w-[7px] shrink-0 items-center justify-center"><span className="h-[18px] w-[2px] bg-[radial-gradient(circle,#aaa_0.7px,transparent_1px)] bg-[length:2px_3px]" /></div>
        <RightDock />
      </div>
      <footer className="flex flex-1 items-center whitespace-nowrap pl-[4px] pt-px font-['DejaVu_Sans_Condensed','DejaVu_Sans',sans-serif] text-[12.5px]">
        <span className="flex h-[26px] w-[200px] shrink-0 items-center rounded-[3px] border border-[#b0b0b0] bg-white pl-[9px] text-[#808080]"><Icon n="lens" className="size-[17px]" /><span className="pl-[7px] tracking-[-0.1px]">Искать (Ctrl+K)</span></span>
        <span className="ml-[675px] w-[74px] shrink-0 pt-[2px]">Координаты</span>
        <span className={`${field} w-[124px] bg-white pl-[6px]`}>6195504 16448323</span>
        <Icon n="extents" className="ml-[4px] size-[20px]" />
        <span className="ml-[13px] w-[104px] shrink-0 pt-[2px]">Масштабировать</span>
        <span className={`${field} w-[93px] justify-between bg-white pl-[3px]`}>1:50000<span className="flex h-full w-[24px] items-center justify-center bg-[#f4f4f4]"><Tri /></span></span>
        <Icon n="lock" className="ml-[10px] size-[20px]" />
        <span className="ml-[7px] w-[73px] shrink-0 pt-[2px]">Увеличение</span>
        <span className={`${field} w-[92px] justify-between bg-white pl-[4px]`}>100%<Spin /></span>
        <span className="ml-[10px] w-[58px] shrink-0 pt-[2px]">Поворот</span>
        <span className={`${field} w-[89px] justify-between bg-white pl-[4px]`}>0,0 °<Spin /></span>
        <Check on className="ml-[6px]" />
        <span className="ml-[6px] w-[76px] shrink-0">Отрисовка</span>
        <Icon n="crs" className="size-[20px]" />
        <span className="ml-[2px] w-[94px] shrink-0 pt-[2px]">EPSG:28416</span>
        <Icon n="chat" className="size-[20px]" />
      </footer>
    </div>
  );
}
